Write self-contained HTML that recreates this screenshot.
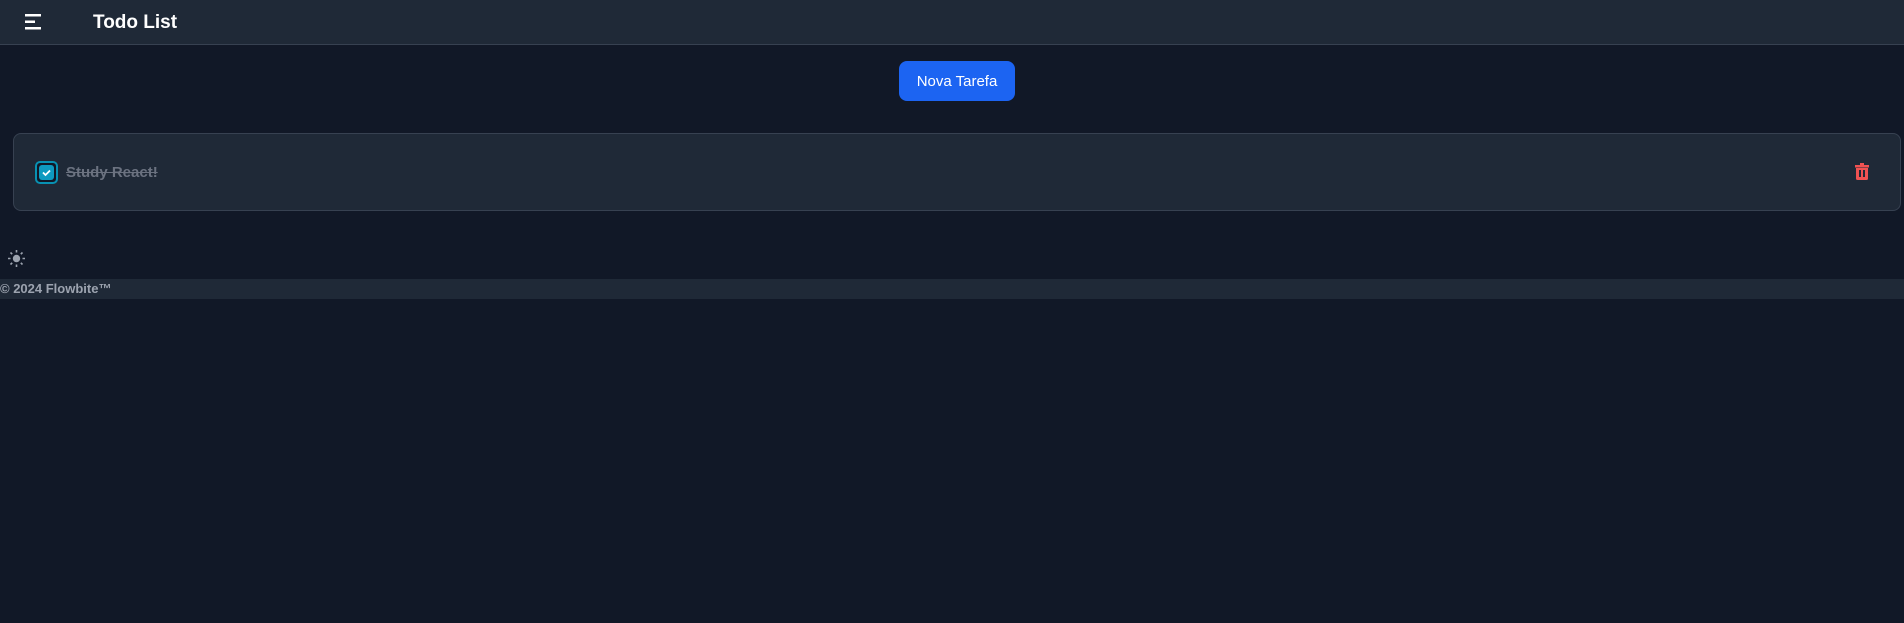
<!DOCTYPE html>
<html><head><meta charset="utf-8"><style>
*{box-sizing:border-box;margin:0;padding:0}
body{width:1904px;height:623px;background:#111827;font-family:"Liberation Sans",sans-serif;position:relative;overflow:hidden}
.hdr{position:absolute;left:0;top:0;width:1904px;height:45px;background:#1f2937;border-bottom:1px solid #374151}
.title{position:absolute;left:93px;top:12px;color:#fff;font-size:19px;font-weight:bold}
.btn{position:absolute;left:899px;top:61px;width:116px;height:40px;background:#1c64f2;border-radius:8px;color:#fff;font-size:15px;text-align:center;line-height:41px}
.card{position:absolute;left:13px;top:133px;width:1888px;height:78px;background:#1f2937;border:1px solid #374151;border-radius:8px}
.cb{position:absolute;left:35px;top:161px;width:23px;height:23px;border:2px solid #0891b2;border-radius:5px;background:#111827;padding:2px}
.cb div{width:15px;height:15px;background:#0e9ac0;border-radius:3px}
.txt{position:absolute;left:66px;top:164px;color:#6b7280;font-size:15px;font-weight:bold;text-decoration:line-through}
.foot{position:absolute;left:0;top:279px;width:1904px;height:20px;background:#1f2937;color:#9ca3af;font-size:13px;font-weight:bold;line-height:20px}
</style></head><body>
<div class="hdr">
<svg style="position:absolute;left:25px;top:14px" width="17" height="16"><rect x="0" y="0" width="16" height="2.5" fill="#fff"/><rect x="0" y="6.5" width="10" height="2.5" fill="#fff"/><rect x="0" y="13" width="16" height="2.5" fill="#fff"/></svg>
<div class="title">Todo List</div></div>
<div class="btn">Nova Tarefa</div>
<div class="card"></div>
<div class="cb"><div><svg width="15" height="15"><path d="M4 7.5l2.5 2.5 4.5-4.5" stroke="#fff" stroke-width="1.8" fill="none"/></svg></div></div>
<div class="txt">Study React!</div>
<svg style="position:absolute;left:1855px;top:163px" width="14" height="17"><rect x="5" y="0" width="4" height="2" fill="#f05252"/><rect x="0" y="2" width="14" height="2.5" fill="#f05252"/><path d="M1 5h12v10.5a1.5 1.5 0 0 1-1.5 1.5h-9A1.5 1.5 0 0 1 1 15.5z" fill="#f05252"/><rect x="4" y="7" width="2" height="7" fill="#1f2937"/><rect x="8" y="7" width="2" height="7" fill="#1f2937"/></svg>
<svg style="position:absolute;left:8px;top:250px" width="17" height="17"><circle cx="8.5" cy="8.5" r="3.7" fill="#9ca3af"/><g stroke="#9ca3af" stroke-width="1.6"><path d="M8.5 0v2.5M8.5 14.5v2.5M0 8.5h2.5M14.5 8.5h2.5M2.5 2.5l1.7 1.7M12.8 12.8l1.7 1.7M2.5 14.5l1.7-1.7M12.8 4.2l1.7-1.7"/></g></svg>
<div class="foot">© 2024 Flowbite™</div>
</body></html>
